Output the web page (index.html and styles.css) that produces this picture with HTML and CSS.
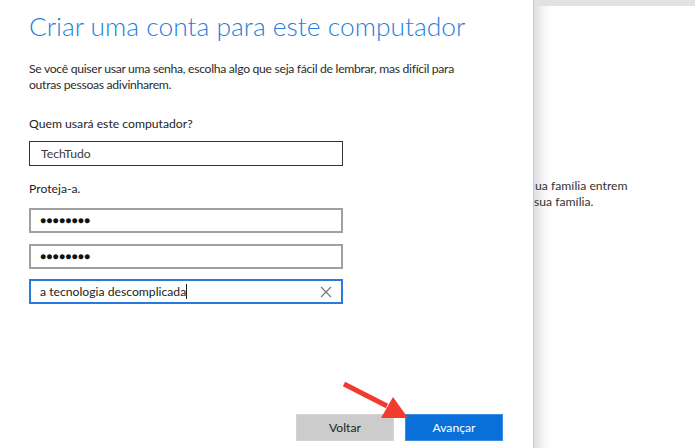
FILE: index.html
```html
<!DOCTYPE html>
<html>
<head>
	<meta charset="UTF-8">
	<title>Criar uma conta</title>
	<link rel="stylesheet" href="styles.css">
</head>
<body>
	<div class="screen">
		<div class="panel">
			<h1 class="title">Criar uma conta para este computador</h1>
			<p class="intro">Se você quiser usar uma senha, escolha algo que seja fácil de lembrar, mas difícil para outras pessoas adivinharem.</p>

			<p class="label">Quem usará este computador?</p>
			<div class="field field-dark">TechTudo</div>

			<p class="label label2">Proteja-a.</p>
			<div class="field field-pass">&#9679;&#9679;&#9679;&#9679;&#9679;&#9679;&#9679;&#9679;</div>
			<div class="field field-pass">&#9679;&#9679;&#9679;&#9679;&#9679;&#9679;&#9679;&#9679;</div>
			<div class="field field-focus">
				<span>a tecnologia descomplicada<i class="caret"></i></span>
				<svg class="clear" width="12" height="12" viewBox="0 0 12 12"><path d="M1 1 L11 11 M11 1 L1 11" stroke="#777" stroke-width="1.2" fill="none"/></svg>
			</div>

			<div class="actions">
				<button class="btn btn-back">Voltar</button>
				<button class="btn btn-next">Avançar</button>
				<!-- seta vermelha por cima dos botões -->
				<svg class="arrow" width="70" height="40" viewBox="0 0 70 40">
					<path d="M2 4 L45 26" stroke="#f23b2f" stroke-width="5" fill="none"/>
					<polygon points="39,38 51,17 66,38" fill="#f23b2f"/>
				</svg>
			</div>
		</div>

		<div class="behind">
			<div class="topbar"></div>
			<div class="behind-text">
				<span class="l1">ua família entrem</span>
				<span class="l2">sua família.</span>
			</div>
		</div>
	</div>
</body>
</html>
```

FILE: styles.css
```css
body{
	margin:0;
	font-family:Lato,"Open Sans",sans-serif;
	color:#333;
	background:#fff;
}
.screen{
	display:flex;
	width:695px;
	height:448px;
	overflow:hidden;
}
.panel{
	width:504px;
	flex-shrink:0;
	padding:0 0 0 29px;
	border-right:1px solid #c6d1ad;
	display:flex;
	flex-direction:column;
}
.title{
	margin:8px 0 0 0;
	font-size:26.4px;
	font-weight:300;
	color:#1f7fdc;
	line-height:36px;
}
.intro{
	margin:17px 0 0 0;
	font-size:12.2px;
	letter-spacing:-0.3px;
	line-height:16px;
	width:440px;
	color:#2b2b2b;
}
.label{
	margin:23px 0 0 0;
	font-size:12.2px;
	line-height:16px;
	color:#1e1e1e;
}
.label2{
	margin-top:15px;
}
.field{
	width:301px;
	height:21px;
	margin-top:11px;
	border:2px solid #a0a0a0;
	padding:0 0 0 9px;
	font-size:12.2px;
	line-height:21px;
	display:flex;
	align-items:center;
	justify-content:space-between;
}
.field-dark{
	border-color:#333;
	color:#3a3a3a;
	border-width:1px;
	height:23px;
	width:301px;
	padding-left:11px;
	margin-top:9px;
}
.field-pass{
	font-size:10px;
	letter-spacing:0.3px;
	color:#111;
}
.field-pass:first-of-type{
	margin-top:10px;
}
.field-focus{
	border-color:#2a79de;
	color:#222;
	margin-top:10px;
}
.caret{
	display:inline-block;
	width:1px;
	height:15px;
	background:#222;
	vertical-align:-3px;
}
.clear{
	margin-right:9px;
}
.actions{
	margin-top:auto;
	margin-bottom:7px;
	display:flex;
	justify-content:flex-end;
	gap:11px;
	padding-right:30px;
	position:relative;
}
.btn{
	width:98px;
	height:27px;
	border:1px solid transparent;
	font-family:Lato,"Open Sans",sans-serif;
	font-size:12.2px;
	padding:0;
}
.btn-back{
	background:#cccccc;
	border-color:#d4d4d4;
	color:#222;
}
.btn-next{
	background:#0a70d9;
	border-color:#3d8ee6;
	color:#fff;
}
.arrow{
	position:absolute;
	left:313px;
	top:-34px;
}
.behind{
	flex:1;
	background:linear-gradient(to right,#dedede,#f6f6f6 10px,#fff 18px);
	display:flex;
	flex-direction:column;
	overflow:hidden;
}
.topbar{
	height:6px;
	background:#e2e2e2;
}
.behind-text{
	margin-top:172px;
	font-size:12.2px;
	line-height:16px;
	color:#333;
	display:flex;
	flex-direction:column;
}
.l1{
	margin-left:1px;
}
```
